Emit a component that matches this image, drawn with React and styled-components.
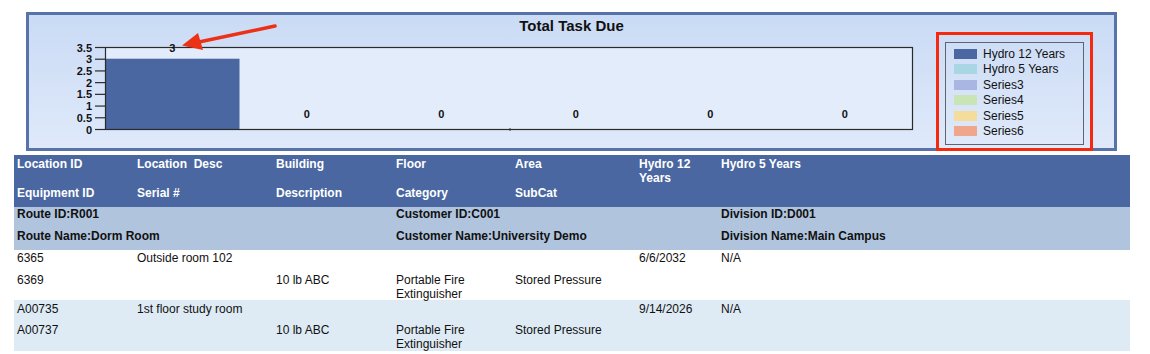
import React from "react";
import styled, { createGlobalStyle } from "styled-components";

const Global = createGlobalStyle`
  html, body { margin: 0; padding: 0; background: #ffffff; }
  body { font-family: "Liberation Sans", Arial, sans-serif; color: #111; }
`;

const Page = styled.div`
  padding-top: 12px;
  width: 1150px;
`;

const Panel = styled.section`
  position: relative;
  box-sizing: border-box;
  margin-left: 26px;
  width: 1091px;
  height: 139px;
  border: 3px solid #5873aa;
  background: linear-gradient(#cadbf5, #dfe9fa);
  padding-top: 2px;
`;

const Title = styled.h1`
  margin: 0 0 5px;
  font-size: 15px;
  line-height: 18px;
  font-weight: bold;
  text-align: center;
  color: #111;
`;

const ChartBody = styled.div`
  display: flex;
  align-items: flex-start;
`;

const PlotSvg = styled.svg`
  display: block;
  flex: none;
`;

const LegendWrap = styled.div`
  position: relative;
  margin-left: 26px;
  margin-top: 2px;
  height: 103px;
`;

const Legend = styled.ul`
  box-sizing: border-box;
  list-style: none;
  margin: 0;
  width: 139px;
  height: 103px;
  padding: 3px 0 0 8px;
  border: 1px solid #5f6470;
`;

const LegendItem = styled.li`
  display: flex;
  align-items: center;
  gap: 6px;
  height: 15.5px;
  font-size: 12px;
  color: #111;
`;

const Swatch = styled.span`
  width: 23px;
  height: 10px;
  background: ${(p) => p.$color};
  flex: none;
`;

const Highlight = styled.div`
  position: absolute;
  left: -9px;
  right: -9px;
  top: -10px;
  bottom: -6px;
  border: 3px solid #f42a10;
  z-index: 2;
  pointer-events: none;
`;

const ArrowSvg = styled.svg`
  position: absolute;
  left: 0;
  top: 0;
  overflow: visible;
  pointer-events: none;
`;

const Table = styled.div`
  margin: 4px 0 0 14px;
  width: 1116px;
  font-size: 12px;
  line-height: 14px;
`;

const Block = styled.div`
  background: ${(p) => p.$bg};
  color: ${(p) => (p.$head ? "#ffffff" : "#111")};
  font-weight: ${(p) => (p.$bold ? "bold" : "normal")};
`;

const Line = styled.div`
  box-sizing: border-box;
  display: grid;
  grid-template-columns: 120px 139px 120px 119px 124px 82px 1fr;
  height: ${(p) => p.$h}px;
  padding-top: ${(p) => p.$pt}px;
`;

const Cell = styled.div`
  padding: 0 3px;
  white-space: pre-wrap;
  grid-column: ${(p) => p.$span || "auto"};
`;

const legendItems = [
  ["Hydro 12 Years", "#4a67a1"],
  ["Hydro 5 Years", "#a8d7e3"],
  ["Series3", "#a9b6e2"],
  ["Series4", "#c9e5b6"],
  ["Series5", "#f4dc9b"],
  ["Series6", "#f0a68b"],
];

const values = [3, 0, 0, 0, 0, 0];

function Plot() {
  const x0 = 76;
  const yTop = 7;
  const yBot = 89;
  const w = 807;
  const cat = w / 6;
  const scale = (yBot - yTop) / 3.5;
  const ticks = [0, 0.5, 1, 1.5, 2, 2.5, 3, 3.5];
  return (
    <PlotSvg width="890" height="100" viewBox="0 0 890 100">
      <rect x={x0 + 0.5} y={yTop + 0.5} width={w} height={yBot - yTop} fill="#e3ecfb" />
      {values.map((v, i) =>
        v > 0 ? (
          <rect
            key={i}
            x={x0 + i * cat}
            y={yBot - v * scale}
            width={cat}
            height={v * scale}
            fill="#4a67a1"
          />
        ) : null
      )}
      <rect
        x={x0 + 0.5}
        y={yTop + 0.5}
        width={w}
        height={yBot - yTop}
        fill="none"
        stroke="#2a2a2a"
        strokeWidth="1.2"
      />
      <rect x="480" y={yBot - 0.5} width="2" height="2" fill="#333" />
      {ticks.map((t) => {
        const y = yBot - t * scale + 0.5;
        return (
          <g key={t}>
            <line x1="66" x2={x0} y1={y} y2={y} stroke="#2a2a2a" strokeWidth="1.2" />
            <text
              x="63"
              y={y}
              textAnchor="end"
              dominantBaseline="central"
              fontFamily="Liberation Sans, Arial, sans-serif"
              fontWeight="bold"
              fontSize="11"
              fill="#111"
            >
              {t}
            </text>
          </g>
        );
      })}
      {values.map((v, i) => (
        <text
          key={i}
          x={x0 + cat * i + cat / 2}
          y={v > 0 ? yTop + 0.5 : 73.5}
          textAnchor="middle"
          dominantBaseline="central"
          fontFamily="Liberation Sans, Arial, sans-serif"
          fontWeight="bold"
          fontSize="11"
          fill="#111"
        >
          {v}
        </text>
      ))}
    </PlotSvg>
  );
}

function Arrow() {
  return (
    <ArrowSvg width="300" height="60" viewBox="0 0 300 60">
      <line x1="246" y1="11" x2="170" y2="27" stroke="#ec3116" strokeWidth="3.5" strokeLinecap="round" />
      <polygon points="153,30.5 169,18 174,35" fill="#ec3116" />
    </ArrowSvg>
  );
}

export default function App() {
  return (
    <Page>
      <Global />
      <Panel>
        <Title>Total Task Due</Title>
        <ChartBody>
          <Plot />
          <LegendWrap>
            <Legend>
              {legendItems.map(([label, color]) => (
                <LegendItem key={label}>
                  <Swatch $color={color} />
                  {label}
                </LegendItem>
              ))}
            </Legend>
            <Highlight />
          </LegendWrap>
        </ChartBody>
        <Arrow />
      </Panel>
      <Table>
        <Block $bg="#4a67a1" $head $bold>
          <Line $h={30} $pt={2}>
            <Cell>Location ID</Cell>
            <Cell>{"Location  Desc"}</Cell>
            <Cell>Building</Cell>
            <Cell>Floor</Cell>
            <Cell>Area</Cell>
            <Cell>Hydro 12 Years</Cell>
            <Cell>Hydro 5 Years</Cell>
          </Line>
          <Line $h={22} $pt={1}>
            <Cell>Equipment ID</Cell>
            <Cell>Serial #</Cell>
            <Cell>Description</Cell>
            <Cell>Category</Cell>
            <Cell>SubCat</Cell>
          </Line>
        </Block>
        <Block $bg="#b0c4de" $bold>
          <Line $h={22} $pt={0}>
            <Cell $span="1 / 4">Route ID:R001</Cell>
            <Cell $span="4 / 7">Customer ID:C001</Cell>
            <Cell $span="7 / 8">Division ID:D001</Cell>
          </Line>
          <Line $h={21} $pt={0}>
            <Cell $span="1 / 4">Route Name:Dorm Room</Cell>
            <Cell $span="4 / 7">Customer Name:University Demo</Cell>
            <Cell $span="7 / 8">Division Name:Main Campus</Cell>
          </Line>
        </Block>
        <Block $bg="#ffffff">
          <Line $h={22} $pt={1}>
            <Cell>6365</Cell>
            <Cell>Outside room 102</Cell>
            <Cell />
            <Cell />
            <Cell />
            <Cell>6/6/2032</Cell>
            <Cell>N/A</Cell>
          </Line>
          <Line $h={28} $pt={1}>
            <Cell>6369</Cell>
            <Cell />
            <Cell>10 lb ABC</Cell>
            <Cell>Portable Fire Extinguisher</Cell>
            <Cell>Stored Pressure</Cell>
          </Line>
        </Block>
        <Block $bg="#deebf5">
          <Line $h={22} $pt={2}>
            <Cell>A00735</Cell>
            <Cell>1st floor study room</Cell>
            <Cell />
            <Cell />
            <Cell />
            <Cell>9/14/2026</Cell>
            <Cell>N/A</Cell>
          </Line>
          <Line $h={29} $pt={1}>
            <Cell>A00737</Cell>
            <Cell />
            <Cell>10 lb ABC</Cell>
            <Cell>Portable Fire Extinguisher</Cell>
            <Cell>Stored Pressure</Cell>
          </Line>
        </Block>
      </Table>
    </Page>
  );
}
